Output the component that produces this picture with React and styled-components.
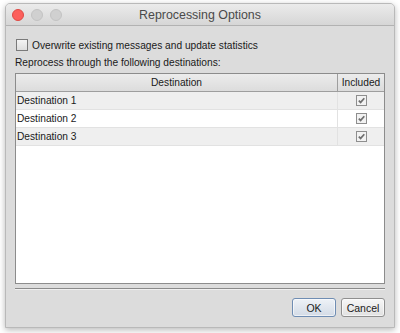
import React from "react";
import styled, { createGlobalStyle } from "styled-components";

const Global = createGlobalStyle`
  html, body { margin: 0; padding: 0; background: #ffffff; }
  body { width: 400px; height: 333px; overflow: hidden; }
`;

const Page = styled.div`
  width: 400px;
  height: 333px;
  padding: 3px 5px 5px 5px;
  box-sizing: border-box;
  display: flex;
`;

const Window = styled.div`
  flex: 1;
  display: flex;
  flex-direction: column;
  background: #dcdcdc;
  border: 1px solid #b9b9b9;
  border-radius: 5px 5px 0 0;
  box-shadow: 0 2px 6px rgba(0, 0, 0, 0.28);
  overflow: hidden;
`;

const TitleBar = styled.div`
  height: 21px;
  flex: 0 0 21px;
  position: relative;
  display: flex;
  align-items: center;
  justify-content: center;
  background: linear-gradient(#ebebeb, #d6d6d6);
  border-bottom: 1px solid #b2b2b2;
  font-family: "Liberation Sans", Arial, sans-serif;
  font-size: 12.4px;
  color: #4a4a4a;
`;

const Lights = styled.div`
  position: absolute;
  left: 6px;
  top: 5px;
  display: flex;
  gap: 7px;
`;

const Light = styled.span`
  width: 12px;
  height: 12px;
  border-radius: 50%;
  box-sizing: border-box;
  background: ${(p) => (p.$red ? "#fc605c" : "#d0d0d0")};
  border: 1px solid ${(p) => (p.$red ? "#de4a45" : "#c3c3c3")};
`;

const Body = styled.div`
  flex: 1;
  display: flex;
  flex-direction: column;
  padding: 12px 9px 10px 9px;
  font-family: "Liberation Sans", Arial, sans-serif;
  font-size: 10.2px;
  color: #1a1a1a;
`;

const CheckRow = styled.label`
  display: flex;
  align-items: center;
  gap: 4px;
  height: 14px;
  margin-left: 1px;
`;

const BigBox = styled.span`
  width: 12px;
  height: 12px;
  box-sizing: border-box;
  border: 1px solid #7a7a7a;
  background: linear-gradient(#f4f4f4, #dedede);
`;

const Label = styled.div`
  margin-top: 4px;
  height: 14px;
  line-height: 14px;
`;

const Table = styled.div`
  margin-top: 3px;
  flex: 1;
  display: flex;
  flex-direction: column;
  background: #ffffff;
  border: 1px solid #8c8c8c;
`;

const Row = styled.div`
  display: grid;
  grid-template-columns: 1fr 46px;
  height: 18px;
  box-sizing: border-box;
  background: ${(p) => p.$bg};
  border-bottom: 1px solid ${(p) => (p.$header ? "#9e9e9e" : "#e2e2e2")};
`;

const Cell = styled.div`
  display: flex;
  align-items: center;
  justify-content: ${(p) => (p.$center ? "center" : "flex-start")};
  padding-left: ${(p) => (p.$center ? 0 : 1)}px;
  border-right: ${(p) => (p.$last ? "none" : "1px solid " + (p.$header ? "#9e9e9e" : "#e2e2e2"))};
`;

const SmallBox = styled.span`
  width: 11px;
  height: 11px;
  box-sizing: border-box;
  border: 1px solid #8e8e8e;
  background: #f2f2f2;
  display: flex;
  align-items: center;
  justify-content: center;
`;

const Separator = styled.div`
  margin-top: 4px;
  height: 0;
  border-top: 1px solid #8a8a8a;
  border-bottom: 1px solid #f0f0f0;
`;

const Footer = styled.div`
  margin-top: 8px;
  display: flex;
  justify-content: flex-end;
  gap: 5px;
`;

const Button = styled.button`
  height: 19px;
  padding: 0;
  width: ${(p) => p.$w}px;
  font-family: "Liberation Sans", Arial, sans-serif;
  font-size: 10.5px;
  color: #1a1a1a;
  border-radius: 3px;
  border: 1px solid ${(p) => (p.$default ? "#6f8db3" : "#8f8f8f")};
  background: ${(p) =>
    p.$default ? "linear-gradient(#eef2f7, #d3dbe6)" : "linear-gradient(#f7f7f7, #e1e1e1)"};
  box-shadow: inset 0 0 0 1px rgba(255, 255, 255, 0.6);
`;

const Check = () => (
  <svg width="9" height="9" viewBox="0 0 9 9">
    <path d="M1.8 4.6 L3.6 6.4 L7.3 2.2" fill="none" stroke="#6f6f6f" strokeWidth="1.7" />
  </svg>
);

const rows = ["Destination 1", "Destination 2", "Destination 3"];

export default function App() {
  return (
    <>
      <Global />
      <Page>
        <Window>
          <TitleBar>
            <Lights>
              <Light $red />
              <Light />
              <Light />
            </Lights>
            Reprocessing Options
          </TitleBar>
          <Body>
            <CheckRow>
              <BigBox />
              Overwrite existing messages and update statistics
            </CheckRow>
            <Label>Reprocess through the following destinations:</Label>
            <Table>
              <Row $header $bg="linear-gradient(#ececec, #dcdcdc)">
                <Cell $header $center>Destination</Cell>
                <Cell $header $center $last>Included</Cell>
              </Row>
              {rows.map((r, i) => (
                <Row key={r} $bg={i % 2 === 0 ? "#efefef" : "#ffffff"}>
                  <Cell>{r}</Cell>
                  <Cell $center $last>
                    <SmallBox>
                      <Check />
                    </SmallBox>
                  </Cell>
                </Row>
              ))}
            </Table>
            <Separator />
            <Footer>
              <Button $default $w={44}>OK</Button>
              <Button $w={44}>Cancel</Button>
            </Footer>
          </Body>
        </Window>
      </Page>
    </>
  );
}
